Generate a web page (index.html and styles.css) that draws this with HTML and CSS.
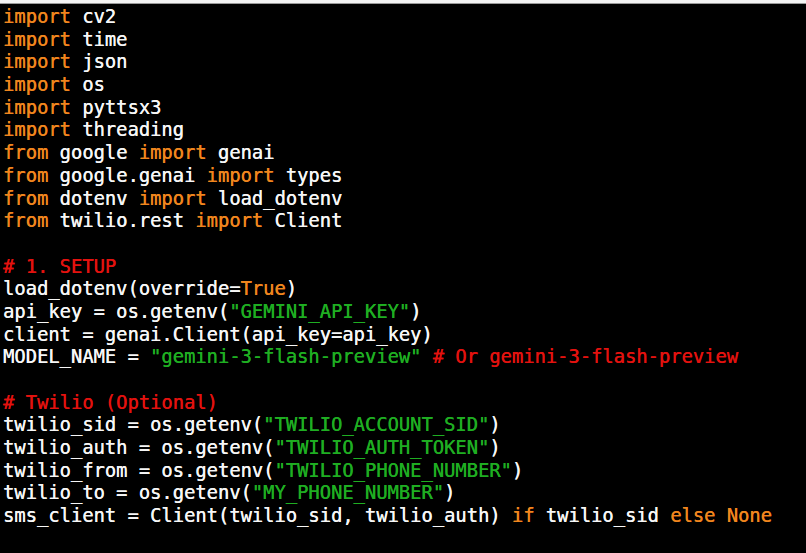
FILE: index.html
```html
<!DOCTYPE html>
<html>
<head>
<meta charset="utf-8">
<link rel="stylesheet" href="styles.css">
</head>
<body>
<div class="topbar"></div>
<pre class="code"><span class="kw">import</span> cv2
<span class="kw">import</span> time
<span class="kw">import</span> json
<span class="kw">import</span> os
<span class="kw">import</span> pyttsx3
<span class="kw">import</span> threading
<span class="kw">from</span> google <span class="kw">import</span> genai
<span class="kw">from</span> google.genai <span class="kw">import</span> types
<span class="kw">from</span> dotenv <span class="kw">import</span> load_dotenv
<span class="kw">from</span> twilio.rest <span class="kw">import</span> Client

<span class="cm"># 1. SETUP</span>
load_dotenv(override=<span class="kw">True</span>)
api_key = os.getenv(<span class="st">"GEMINI_API_KEY"</span>)
client = genai.Client(api_key=api_key)
MODEL_NAME = <span class="st">"gemini-3-flash-preview"</span> <span class="cm"># Or gemini-3-flash-preview</span>

<span class="cm"># Twilio (Optional)</span>
twilio_sid = os.getenv(<span class="st">"TWILIO_ACCOUNT_SID"</span>)
twilio_auth = os.getenv(<span class="st">"TWILIO_AUTH_TOKEN"</span>)
twilio_from = os.getenv(<span class="st">"TWILIO_PHONE_NUMBER"</span>)
twilio_to = os.getenv(<span class="st">"MY_PHONE_NUMBER"</span>)
sms_client = Client(twilio_sid, twilio_auth) <span class="kw">if</span> twilio_sid <span class="kw">else</span> <span class="kw">None</span>
</pre>
</body>
</html>
```
FILE: styles.css
```css
html, body {
  margin: 0;
  padding: 0;
  background: #000;
  height: 100%;
  overflow: hidden;
}
.topbar {
  height: 3px;
  background: #f4f4f4;
  border-bottom: 1px solid #9a9a9a;
}
.code {
  margin: 0;
  padding: 2px 0 0 3px;
  font-family: "DejaVu Sans Mono", monospace;
  font-size: 18.8px;
  line-height: 22.68px;
  color: #f6f6f6;
  white-space: pre;
  text-shadow: 0.3px 0 0 currentColor;
}
.kw { color: #f0861e; }
.st { color: #1fae22; }
.cm { color: #e3120f; }
```
